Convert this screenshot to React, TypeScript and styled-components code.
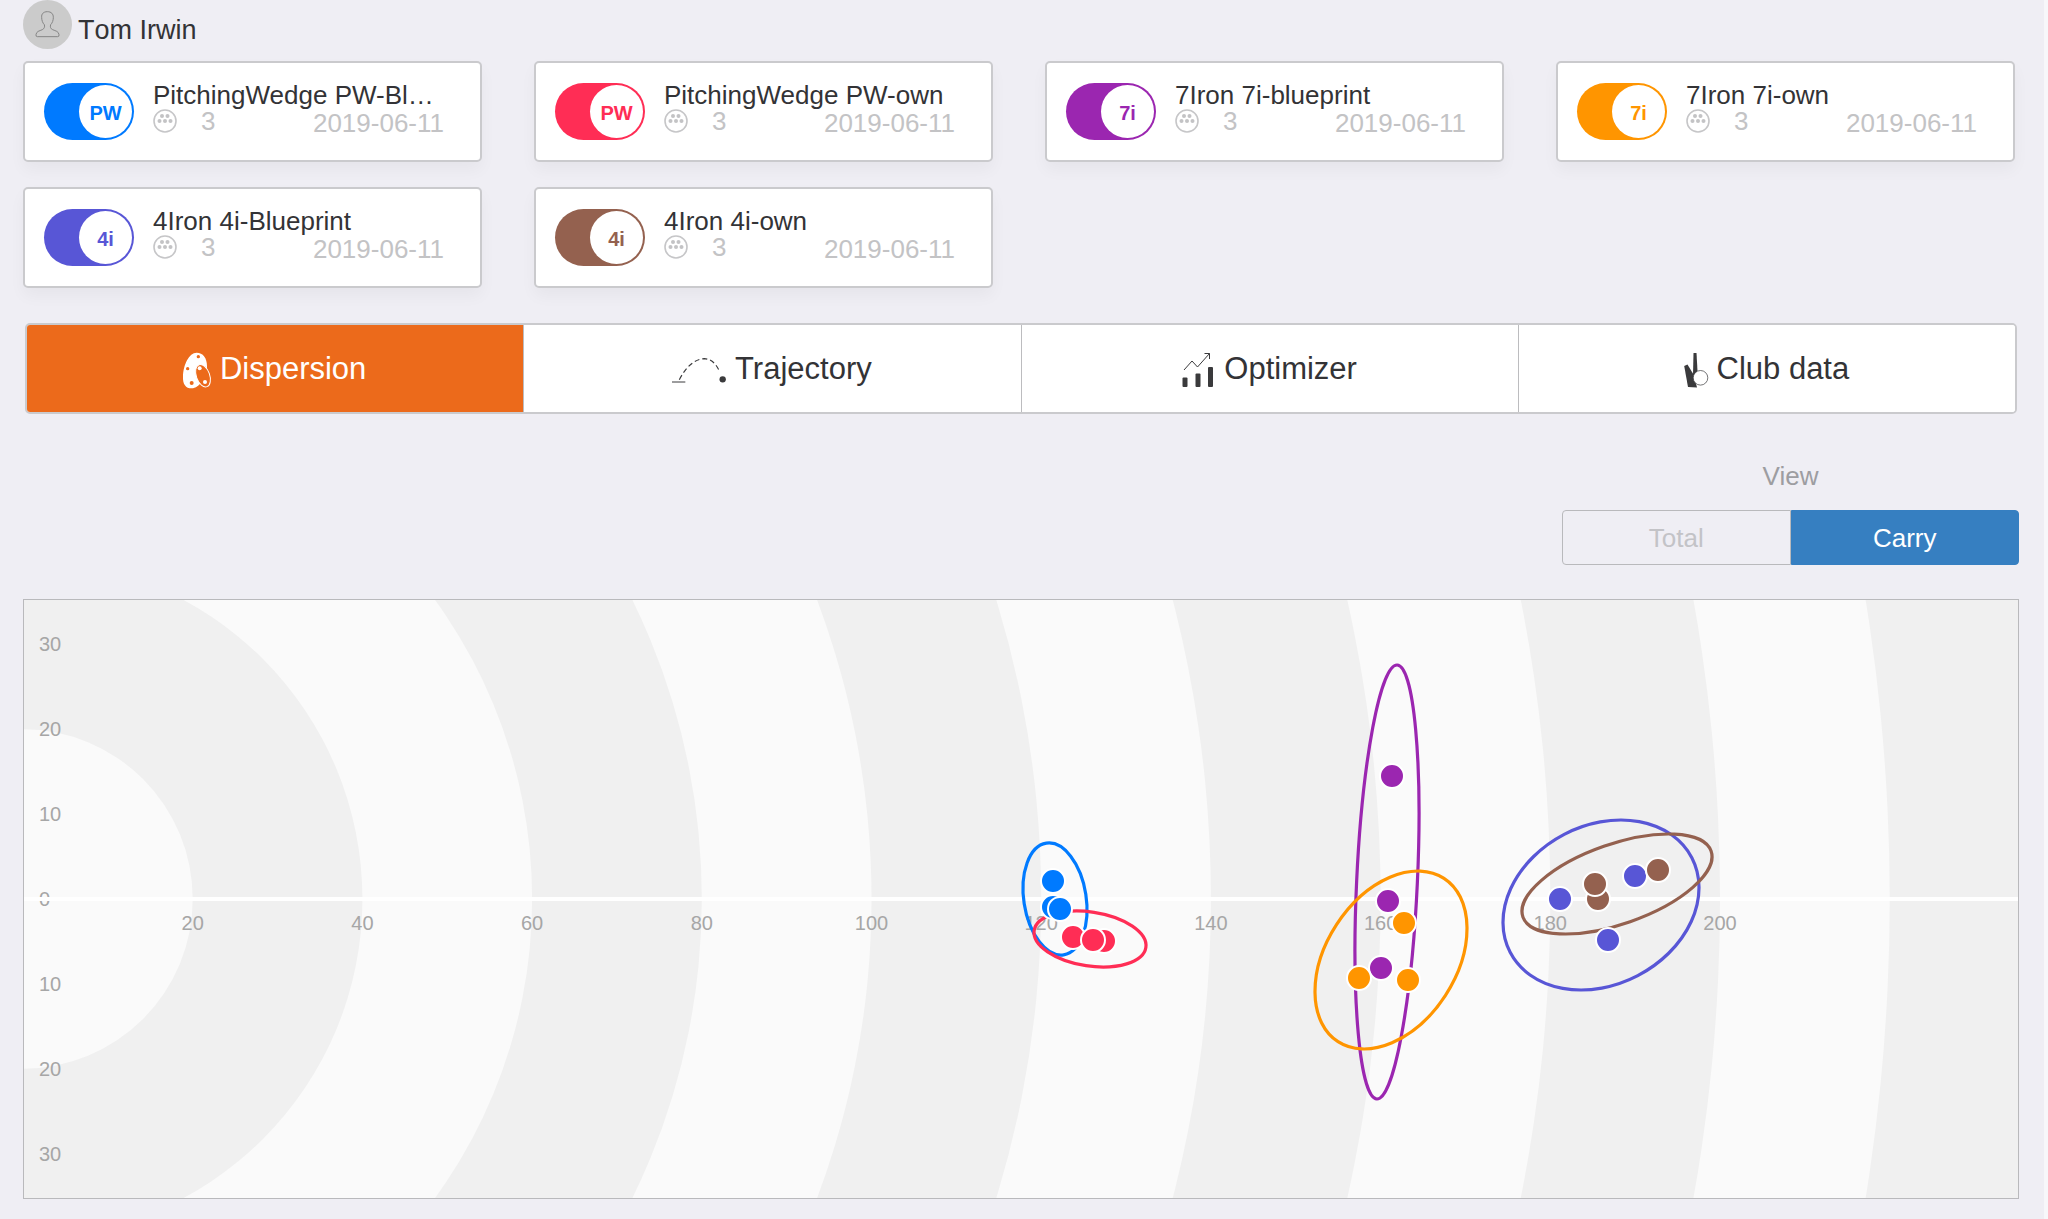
import React, { useState } from "react";
import styled, { createGlobalStyle } from "styled-components";

const GlobalStyle = createGlobalStyle`
  *, *::before, *::after { box-sizing: border-box; }
  body {
    margin: 0;
    background: #efeef4;
    font-family: "Liberation Sans", Arial, Helvetica, sans-serif;
    color: #333336;
  }
  button { font-family: inherit; cursor: pointer; }
`;

const Page = styled.main`
  padding: 0 25px 20px 23px;
  background: #efeef4;
  border-right: 4px solid #f7f7fa;
`;

const Header = styled.header`
  display: flex;
  align-items: flex-start;
  gap: 6px;
  height: 61px;
`;

const Avatar = styled.svg`
  display: block;
  flex: none;
  width: 49px;
  height: 49px;
`;

const UserName = styled.h1`
  margin: 0;
  padding-top: 15px;
  font-size: 27px;
  line-height: 30px;
  font-weight: 400;
  font-kerning: none;
`;

const CardGrid = styled.section`
  display: grid;
  grid-template-columns: repeat(4, minmax(0, 1fr));
  gap: 25px 52px;
  padding-right: 4px;
`;

const Card = styled.article`
  display: flex;
  align-items: center;
  gap: 19px;
  height: 101px;
  padding: 0 36px 0 19px;
  background: #fff;
  border: 2px solid #cacacd;
  border-radius: 5px;
  box-shadow: 0 8px 16px rgba(0, 0, 0, 0.04);
`;

const Toggle = styled.label<{ $color: string }>`
  position: relative;
  display: flex;
  flex: none;
  align-items: center;
  justify-content: flex-end;
  width: 90px;
  height: 57px;
  padding: 2px;
  border-radius: 29px;
  background: ${(p) => p.$color};
  color: ${(p) => p.$color};
  cursor: pointer;

  &:has(input:not(:checked)) {
    justify-content: flex-start;
    background: #c5c5c8;
  }
`;

const ToggleInput = styled.input`
  position: absolute;
  inset: 0;
  width: 100%;
  height: 100%;
  margin: 0;
  opacity: 0;
  cursor: pointer;
`;

const Knob = styled.span`
  display: flex;
  align-items: center;
  justify-content: center;
  width: 53px;
  height: 53px;
  padding-top: 3px;
  border-radius: 50%;
  background: #fff;
  font-size: 20px;
  font-weight: 700;
`;

const ClubInfo = styled.div`
  flex: 1;
  min-width: 0;
  padding-bottom: 5px;
`;

const ClubName = styled.h2`
  margin: 0;
  overflow: hidden;
  white-space: nowrap;
  text-overflow: ellipsis;
  font-size: 26px;
  line-height: 28px;
  font-weight: 400;
`;

const ClubMeta = styled.div`
  display: flex;
  align-items: flex-start;
  justify-content: space-between;
  color: #c3c3c5;
  font-size: 26px;
  line-height: 28px;
`;

const ShotCount = styled.span`
  display: flex;
  align-items: center;
  gap: 24px;
  line-height: 24px;
`;

const TabBar = styled.nav`
  display: flex;
  height: 91px;
  margin: 35px 2px 0;
  border: 2px solid #cacacd;
  border-radius: 5px;
  overflow: hidden;
  background: #fff;
`;

const Tab = styled.button<{ $active: boolean }>`
  display: flex;
  flex: 1;
  align-items: center;
  justify-content: center;
  gap: 8px;
  padding: 0 2px 0 0;
  border: 0;
  background: ${(p) => (p.$active ? "#ec6a1b" : "#fff")};
  color: ${(p) => (p.$active ? "#fff" : "#333336")};
  font-size: 31px;
  line-height: 36px;

  & + & { border-left: 1px solid #bcbcbf; }
`;

const TabIcon = styled.svg`
  display: block;
  flex: none;
  height: 37px;
  margin-top: 4px;
`;

const ViewPicker = styled.fieldset`
  width: 457px;
  margin: 47px 0 0 auto;
  padding: 0;
  border: 0;
`;

const ViewLabel = styled.legend`
  width: 100%;
  padding: 0 0 19px;
  color: #9d9da1;
  font-size: 26px;
  line-height: 30px;
  text-align: center;
`;

const Segments = styled.div`
  display: flex;
  height: 55px;
`;

const Segment = styled.button<{ $active: boolean }>`
  flex: 1;
  padding: 0;
  border: 1px solid ${(p) => (p.$active ? "#367fc1" : "#b9b9bc")};
  background: ${(p) => (p.$active ? "#367fc1" : "transparent")};
  color: ${(p) => (p.$active ? "#fff" : "#c3c3c7")};
  font-size: 26px;
  line-height: 30px;

  &:first-child { border-radius: 4px 0 0 4px; }
  &:last-child { border-radius: 0 4px 4px 0; }
`;

const ChartFrame = styled.section`
  margin-top: 34px;
  border: 1px solid #b9b9bc;
`;

const ChartSvg = styled.svg`
  display: block;
  width: 100%;
  height: auto;
`;

const AxisText = styled.text`
  fill: #a6a6a6;
  font-size: 20px;
`;

type Series = {
  id: string;
  short: string;
  name: string;
  color: string;
  /* centre, half width, half height, and x shift of the lowest point */
  spread: [number, number, number, number, number];
  shots: [number, number][];
};

const SERIES: Series[] = [
  { id: "pw-bp", short: "PW", name: "PitchingWedge PW-Blueprint", color: "#007aff",
    spread: [1031, 299, 32, 56, 6], shots: [[1029, 281], [1029, 307], [1036, 309]] },
  { id: "pw-own", short: "PW", name: "PitchingWedge PW-own", color: "#ff2d55",
    spread: [1066, 339, 56, 28, 13], shots: [[1049, 337], [1080, 341], [1069, 340]] },
  { id: "7i-bp", short: "7i", name: "7Iron 7i-blueprint", color: "#9b26b0",
    spread: [1363, 282, 32, 217, -10], shots: [[1368, 176], [1364, 301], [1357, 368]] },
  { id: "7i-own", short: "7i", name: "7Iron 7i-own", color: "#ff9500",
    spread: [1367, 360, 76, 89, -27], shots: [[1380, 323], [1335, 378], [1384, 380]] },
  { id: "4i-bp", short: "4i", name: "4Iron 4i-Blueprint", color: "#5856d6",
    spread: [1577, 305, 98, 85, -20], shots: [[1536, 299], [1611, 276], [1584, 340]] },
  { id: "4i-own", short: "4i", name: "4Iron 4i-own", color: "#94614f",
    spread: [1593, 284, 95, 50, -52], shots: [[1634, 270], [1574, 299], [1571, 284]] },
];

const CHART_W = 1994;
const CHART_H = 598;
const ORIGIN_X = -1;
const ORIGIN_Y = 299;
const PX_PER_YARD = 8.485;
const RINGS = [220, 200, 180, 160, 140, 120, 100, 80, 60, 40, 20];

function SpreadEllipse({ series }: { series: Series }) {
  const [cx, cy, w, h, lean] = series.spread;
  const xx = w * w;
  const yy = h * h;
  const xy = lean * h;
  const mean = (xx + yy) / 2;
  const diff = Math.hypot((xx - yy) / 2, xy);
  const angle = (Math.atan2(2 * xy, xx - yy) / 2) * (180 / Math.PI);
  return (
    <ellipse
      cx={cx} cy={cy}
      rx={Math.sqrt(mean + diff)} ry={Math.sqrt(mean - diff)}
      transform={`rotate(${angle} ${cx} ${cy})`}
      fill="none" stroke={series.color} strokeWidth={3.2}
    />
  );
}

function DispersionChart({ series }: { series: Series[] }) {
  return (
    <ChartFrame>
      <ChartSvg viewBox={`0 0 ${CHART_W} ${CHART_H}`} role="img" aria-label="Shot dispersion">
        <rect width={CHART_W} height={CHART_H} fill="#f0f0f0" />
        {RINGS.map((yards) => (
          <circle key={yards} cx={ORIGIN_X} cy={ORIGIN_Y} r={yards * PX_PER_YARD}
            fill={(yards / 20) % 2 ? "#fafafa" : "#f0f0f0"} />
        ))}
        {[30, 20, 10, 0, -10, -20, -30].map((yards) => (
          <AxisText key={yards} x={15} y={ORIGIN_Y + 7 - yards * PX_PER_YARD}>{Math.abs(yards)}</AxisText>
        ))}
        {RINGS.slice(1).map((yards) => (
          <AxisText key={yards} x={ORIGIN_X + yards * PX_PER_YARD} y={ORIGIN_Y + 31} textAnchor="middle">{yards}</AxisText>
        ))}
        <rect y={ORIGIN_Y - 2} width={CHART_W} height={4} fill="#fff" />
        {series.map((s) => <SpreadEllipse key={s.id} series={s} />)}
        {series.map((s) => s.shots.map(([x, y]) => (
          <circle key={`${s.id}-${x}-${y}`} cx={x} cy={y} r={12} fill={s.color} stroke="#fff" strokeWidth={2} />
        )))}
      </ChartSvg>
    </ChartFrame>
  );
}

function UserIcon() {
  return (
    <Avatar viewBox="69 -1 147 147" aria-hidden="true">
      <circle cx="142.500" cy="72.500" r="73.500" fill="#cbcbcb" />
      <path
        d="M142 34C130 34 124 41 125 51C125 60 128 68 133 73C135 79 133 85 127 88C118 92 109 93 108 103Q107 109 112 109H173Q178 109 177 103C176 93 167 92 158 88C151 85 150 79 152 73C157 68 160 60 160 51C160 41 154 34 142 34Z"
        fill="none" stroke="#858585" strokeWidth="3" />
    </Avatar>
  );
}

function BallIcon() {
  return (
    <svg width="24" height="24" viewBox="0 0 24 24" aria-hidden="true">
      <circle cx="12" cy="12" r="11" fill="none" stroke="#c6c6c8" strokeWidth="1.6" />
      <g fill="#c3c3c5">
        <circle cx="9" cy="7" r="2" /><circle cx="14.500" cy="7" r="2" />
        <circle cx="6.500" cy="12" r="2" /><circle cx="12" cy="12" r="2" /><circle cx="17.500" cy="12" r="2" />
      </g>
    </svg>
  );
}

function DispersionIcon() {
  return (
    <TabIcon width="30" viewBox="63 38 90 111" aria-hidden="true">
      <path d="M107 40C126 40 138 56 138 80C138 112 116 147 92 147C74 147 65 134 66 112C67 76 84 40 107 40Z" fill="#fff" />
      <ellipse cx="126" cy="109" rx="20" ry="35" transform="rotate(-20 126 109)" fill="#ec6a1b" stroke="#fff" strokeWidth="3" />
      <g fill="#ec6a1b"><circle cx="112" cy="52" r="5" /><circle cx="80" cy="88" r="5" /><circle cx="92" cy="131" r="6" /></g>
      <g fill="#fff"><circle cx="116" cy="87" r="6" /><circle cx="132" cy="128" r="6" /></g>
    </TabIcon>
  );
}

function TrajectoryIcon() {
  return (
    <TabIcon width="56" viewBox="30 38 168 111" aria-hidden="true" fill="none" stroke="#3a3a3c">
      <path d="M33 128H73" strokeWidth="3" />
      <path d="M55 121C76 80 104 58 130 58C152 59 166 74 177 99" strokeWidth="3.500" strokeDasharray="15 9" />
      <circle cx="185" cy="120" r="9.500" fill="#3a3a3c" stroke="none" />
    </TabIcon>
  );
}

function OptimizerIcon() {
  return (
    <TabIcon width="36" viewBox="20 12 36 37" aria-hidden="true" fill="none" stroke="#3a3a3c">
      <path d="M24 30L32 21L37.500 27L49.500 13.500M44.500 13.500H49.500V19" strokeWidth="1" />
      <g fill="#3a3a3c" stroke="none">
        <rect x="22.500" y="37.500" width="5" height="9.500" rx="1" />
        <rect x="35.500" y="33.500" width="5" height="13.500" rx="1" />
        <rect x="48" y="27" width="5" height="20" rx="1" />
      </g>
    </TabIcon>
  );
}

function ClubIcon() {
  return (
    <TabIcon width="26" viewBox="523 12 26 37" aria-hidden="true">
      <path d="M533.500 13H536.500L537.500 31L535 35H533Z" fill="#3a3a3c" />
      <path d="M524.200 26L527.500 24.500L533.500 34.500L537 47.500L528 47Z" fill="#3a3a3c" />
      <circle cx="540.500" cy="37.800" r="7.300" fill="#fff" stroke="#3a3a3c" strokeWidth="0.700" />
    </TabIcon>
  );
}

const TABS = [
  { label: "Dispersion", icon: <DispersionIcon /> },
  { label: "Trajectory", icon: <TrajectoryIcon /> },
  { label: "Optimizer", icon: <OptimizerIcon /> },
  { label: "Club data", icon: <ClubIcon /> },
];

export default function App() {
  const [hidden, setHidden] = useState<string[]>([]);
  const [tab, setTab] = useState("Dispersion");
  const [view, setView] = useState("Carry");

  const toggle = (id: string) =>
    setHidden((ids) => (ids.includes(id) ? ids.filter((i) => i !== id) : [...ids, id]));

  return (
    <>
      <GlobalStyle />
      <Page>
        <Header>
          <UserIcon />
          <UserName>Tom Irwin</UserName>
        </Header>
        <CardGrid>
          {SERIES.map((s) => (
            <Card key={s.id}>
              <Toggle $color={s.color}>
                <ToggleInput type="checkbox" checked={!hidden.includes(s.id)} onChange={() => toggle(s.id)} />
                <Knob>{s.short}</Knob>
              </Toggle>
              <ClubInfo>
                <ClubName>{s.name}</ClubName>
                <ClubMeta>
                  <ShotCount><BallIcon />3</ShotCount>
                  <time>2019-06-11</time>
                </ClubMeta>
              </ClubInfo>
            </Card>
          ))}
        </CardGrid>
        <TabBar>
          {TABS.map((t) => (
            <Tab key={t.label} type="button" $active={tab === t.label} onClick={() => setTab(t.label)}>
              {t.icon}{t.label}
            </Tab>
          ))}
        </TabBar>
        <ViewPicker>
          <ViewLabel>View</ViewLabel>
          <Segments>
            {["Total", "Carry"].map((v) => (
              <Segment key={v} type="button" $active={view === v} aria-pressed={view === v} onClick={() => setView(v)}>
                {v}
              </Segment>
            ))}
          </Segments>
        </ViewPicker>
        <DispersionChart series={SERIES.filter((s) => !hidden.includes(s.id))} />
      </Page>
    </>
  );
}
